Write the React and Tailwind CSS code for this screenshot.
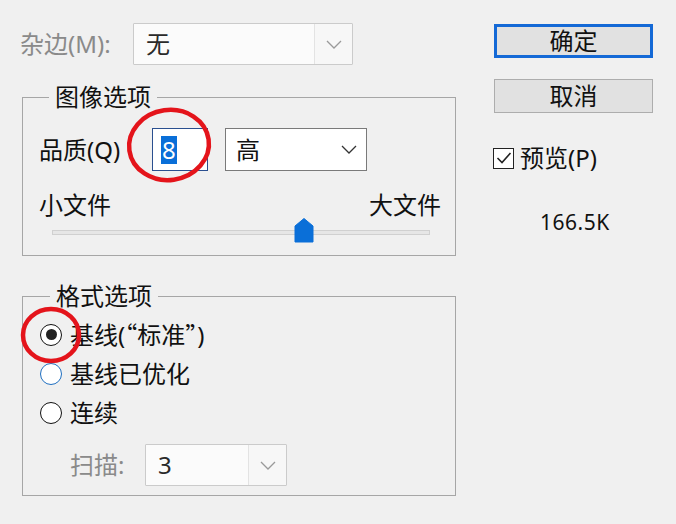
import React from "react";

function Chevron({ color = "#555" }) {
  return (
    <svg width="16" height="9" viewBox="0 0 16 9" fill="none">
      <polyline points="1,1 8,8 15,1" stroke={color} strokeWidth="1.3" />
    </svg>
  );
}

function DisabledSelect({ width, value, divider }) {
  return (
    <div
      className="flex h-[42px] border border-[#cbcbcb] bg-[#f7f7f7] rounded-[1px]"
      style={{ width }}
    >
      <div
        className="flex items-center pl-[12px] text-[#2a2a2a] bg-[#fbfbfb] border-r border-[#e3e3e3]"
        style={{ width: divider }}
      >
        {value}
      </div>
      <div className="flex-1 flex items-center justify-center">
        <Chevron color="#9a9a9a" />
      </div>
    </div>
  );
}

function Radio({ checked, blue }) {
  return (
    <div
      className={
        "w-[22px] h-[22px] rounded-full border-[1.5px] flex items-center justify-center bg-white " +
        (blue ? "border-[#1f6fc0]" : "border-[#111]")
      }
    >
      {checked && <div className="w-[11px] h-[11px] rounded-full bg-[#222]" />}
    </div>
  );
}

export default function App() {
  return (
    <div className="relative w-[676px] h-[524px] overflow-hidden bg-[#f0f0f0] flex text-[24px] text-[#111] font-['Noto_Sans','Noto_Sans_CJK_SC',sans-serif]">
      {/* Left column */}
      <div className="w-[470px] pl-[20px] pt-[23px]">
        <div className="flex items-center h-[42px]">
          <span className="w-[113px] text-[#8a8a8a] leading-[42px]">杂边(M):</span>
          <DisabledSelect width={220} value="无" divider={181} />
        </div>

        {/* 图像选项 */}
        <fieldset className="mt-[18px] ml-[2px] w-[434px] border border-[#a6a6a6] pl-[16px] pr-[14px] pt-[17px] pb-[20px]">
          <legend className="ml-[10px] px-[6px] leading-[28px]">图像选项</legend>
          <div className="flex items-center h-[43px]">
            <span className="w-[113px] leading-[43px]">品质(Q)</span>
            <div className="w-[56px] h-[43px] border border-[#2a4f8f] bg-white flex items-center pl-[8px]">
              <span className="bg-[#0a6fd8] text-white leading-[28px] px-[1px]">8</span>
            </div>
            <div className="ml-[17px] w-[142px] h-[43px] border border-[#7a7a7a] bg-white flex items-center pl-[10px] pr-[9px] justify-between">
              <span>高</span>
              <Chevron color="#333" />
            </div>
          </div>
          <div className="flex justify-between mt-[19px] leading-[30px]">
            <span>小文件</span>
            <span>大文件</span>
          </div>
          <div className="relative mt-[10px] ml-[13px] w-[378px] h-[5px] bg-[#e6e6e6] border border-[#d0d0d0]">
            <svg
              className="absolute left-[241px] top-[-13px]"
              width="20"
              height="25"
              viewBox="0 0 20 25"
            >
              <path d="M1 8 L10 0.5 L19 8 V24 H1 Z" fill="#0a6fd8" stroke="#0a6fd8" strokeLinejoin="round" />
            </svg>
          </div>
        </fieldset>

        {/* 格式选项 */}
        <fieldset className="mt-[26px] ml-[2px] w-[434px] border border-[#a6a6a6] pl-[17px] pt-[5px] pb-[9px]">
          <legend className="ml-[10px] px-[6px] leading-[28px]">格式选项</legend>
          <div className="flex items-center h-[39px] gap-[8px]">
            <Radio checked />
            <span>
              基线(<span className="font-['Noto_Sans_CJK_SC',sans-serif]">“</span>标准<span className="font-['Noto_Sans_CJK_SC',sans-serif]">”</span>)
            </span>
          </div>
          <div className="flex items-center h-[39px] gap-[8px]">
            <Radio blue />
            <span>基线已优化</span>
          </div>
          <div className="flex items-center h-[39px] gap-[8px]">
            <Radio />
            <span>连续</span>
          </div>
          <div className="flex items-center mt-[12px] pl-[30px]">
            <span className="w-[75px] text-[#8a8a8a]">扫描:</span>
            <DisabledSelect width={142} value="3" divider={103} />
          </div>
        </fieldset>
      </div>

      {/* Right column */}
      <div className="pl-[24px] pt-[24px] flex flex-col">
        <button className="w-[159px] h-[34px] border-[3px] border-[#1469d6] bg-[#e1e1e1] leading-[28px] text-[#111]">
          确定
        </button>
        <button className="mt-[21px] w-[159px] h-[34px] border border-[#adadad] bg-[#e1e1e1] leading-[32px] text-[#111]">
          取消
        </button>
        <div className="mt-[32px] -ml-[1px] flex items-center h-[26px] gap-[6px]">
          <div className="w-[21px] h-[21px] border-[1.5px] border-[#222] bg-white flex items-center justify-center">
            <svg width="16" height="14" viewBox="0 0 16 14" fill="none">
              <polyline points="1.5,7 6,11.5 14.5,2" stroke="#222" strokeWidth="1.6" />
            </svg>
          </div>
          <span className="leading-[26px]">预览(P)</span>
        </div>
        <div className="mt-[36px] pl-[46px] text-[21px] leading-[30px] tracking-[0.5px]">166.5K</div>
      </div>

      {/* Red annotation circles */}
      <svg className="absolute left-0 top-0 pointer-events-none" width="676" height="524">
        <ellipse cx="169" cy="145" rx="40" ry="35" fill="none" stroke="#e4141b" strokeWidth="4.5" transform="rotate(-8 169 145)" />
        <ellipse cx="51" cy="335" rx="28" ry="26" fill="none" stroke="#e4141b" strokeWidth="4.5" />
      </svg>
    </div>
  );
}
